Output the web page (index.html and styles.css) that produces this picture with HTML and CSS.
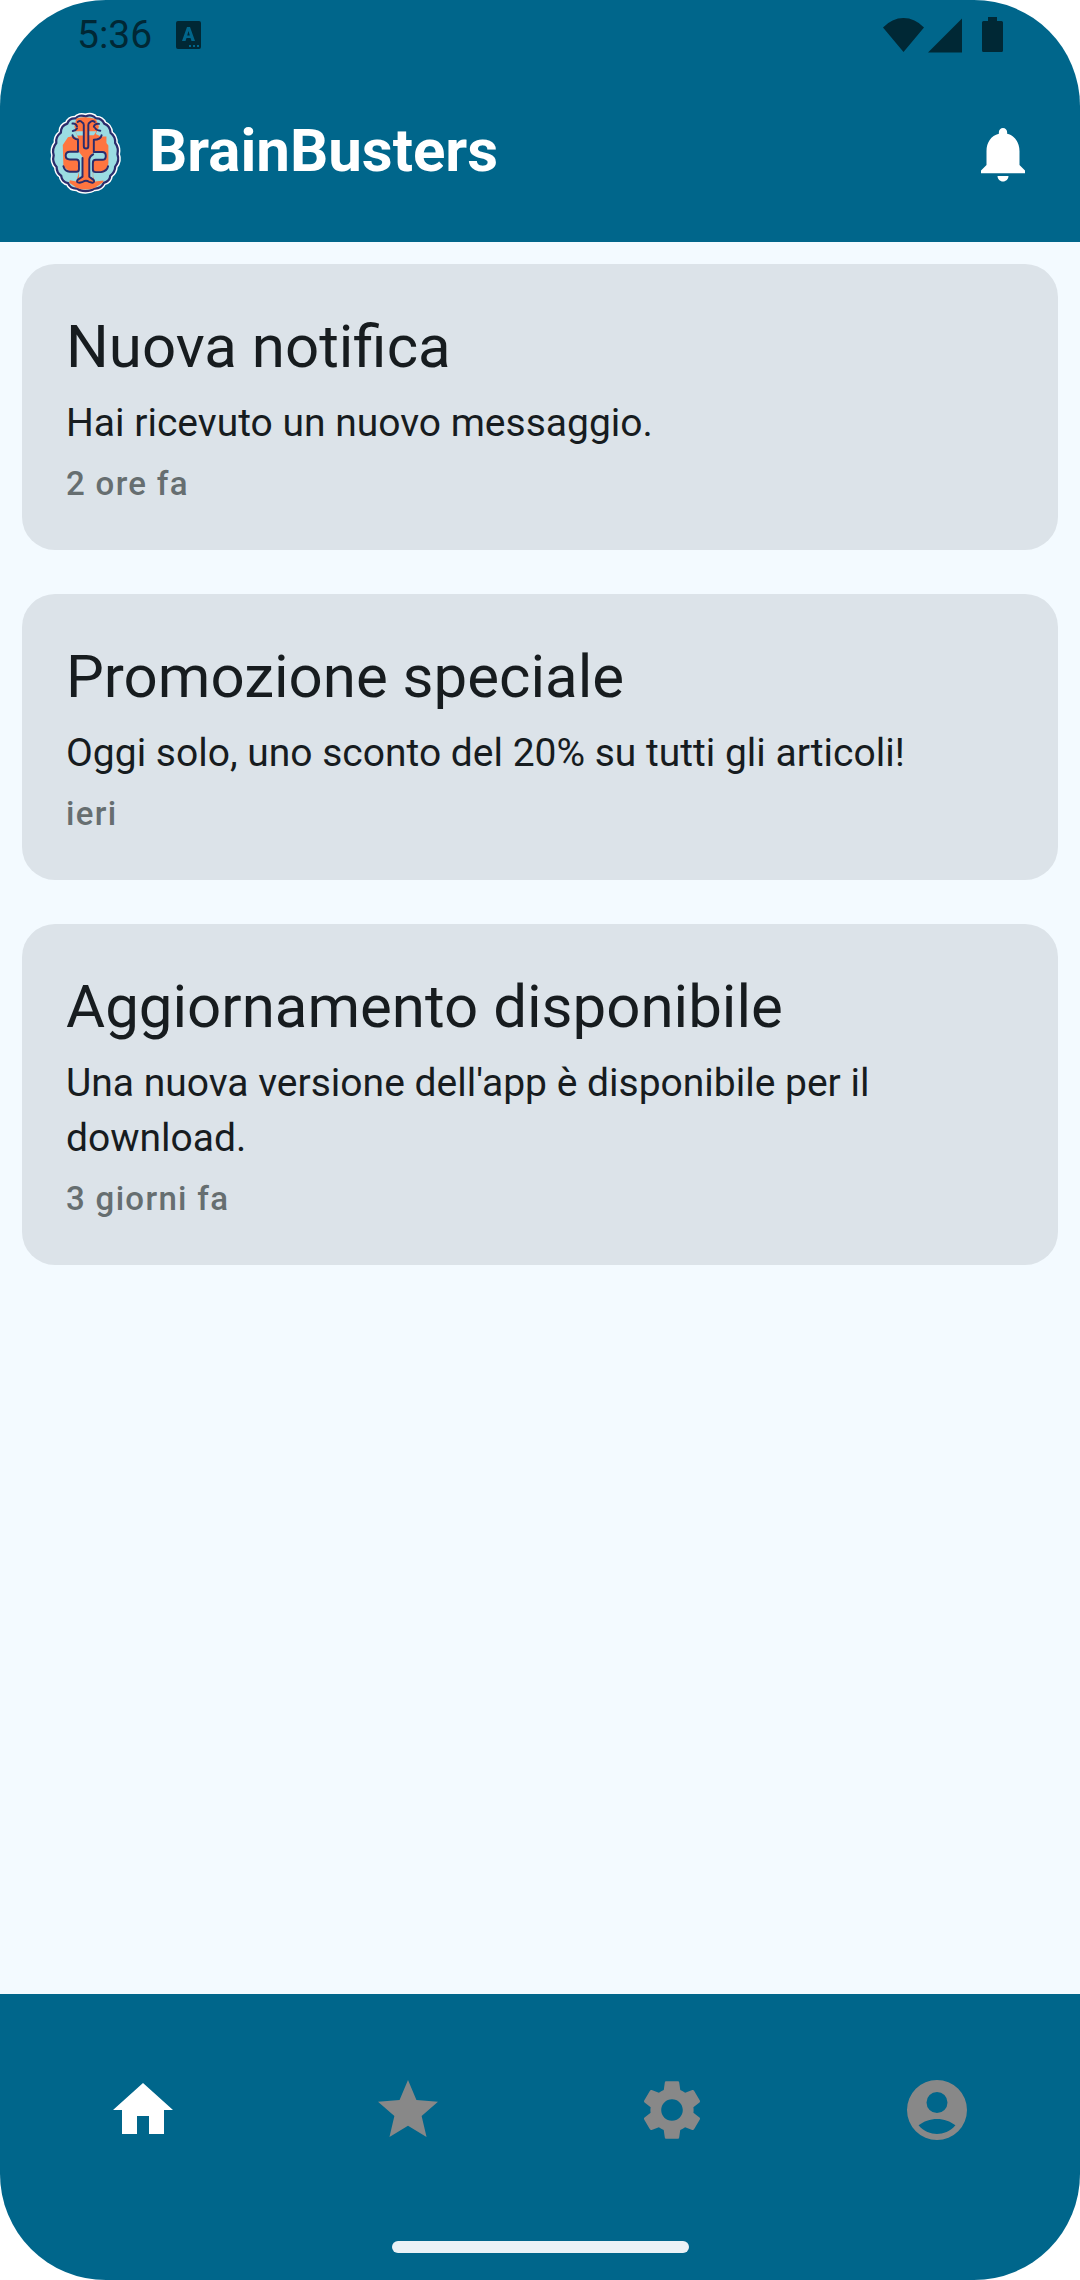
FILE: index.html
```html
<!DOCTYPE html>
<html lang="it">
<head>
<meta charset="utf-8">
<meta name="viewport" content="width=device-width, initial-scale=1">
<title>BrainBusters</title>
<link rel="stylesheet" href="styles.css">
</head>
<body>
<div class="screen">
  <header class="top">
    <div class="status">
      <span class="clock">5:36</span>
      <svg class="status-app" viewBox="0 0 25 28" aria-hidden="true"><path fill-rule="evenodd" d="M2 0h21a2 2 0 0 1 2 2v24a2 2 0 0 1-2 2H2a2 2 0 0 1-2-2V2a2 2 0 0 1 2-2zM11 6 6 20h3.500l1-3h4l1 3H19L14 6zM12.500 10 13.800 14.500h-2.600zM13 24v2h2v-2zM17 24v2h2v-2zM21 24v2h2v-2z"/></svg>
      <svg class="status-signal" viewBox="0 0 121 36" aria-hidden="true"><path d="M0 10.500Q9 1 20.500 1T41 10.500L20.500 35zM45 35.500 79 1.500v34zM105 0h9v4h4.500q1.500 0 1.500 1.500v28q0 1.500-1.500 1.500h-18q-1.500 0-1.500-1.500v-28q0-1.500 1.500-1.500h4.500z"/></svg>
    </div>
    <div class="appbar">
      <svg class="logo" viewBox="8 26 272 272" aria-hidden="true">
        <path class="brain-rim" d="M137 46C124 40 111 44 106 52C93 51 84 57 80 68C67 72 60 83 60 96C50 104 44 116 46 128C37 139 34 154 38 166C34 181 39 194 47 202C47 215 53 224 61 229C62 241 71 250 82 252C87 263 98 270 111 269C121 279 151 279 163 269C177 270 188 262 193 251C205 248 212 240 213 229C223 222 228 212 228 201C237 190 240 176 235 163C238 150 235 137 228 128C229 115 223 104 214 97C213 82 206 72 194 68C189 57 180 51 168 52C162 43 149 40 137 46Z"/>
        <path class="brain-body" d="M137 46C124 40 111 44 106 52C93 51 84 57 80 68C67 72 60 83 60 96C50 104 44 116 46 128C37 139 34 154 38 166C34 181 39 194 47 202C47 215 53 224 61 229C62 241 71 250 82 252C87 263 98 270 111 269C121 279 151 279 163 269C177 270 188 262 193 251C205 248 212 240 213 229C223 222 228 212 228 201C237 190 240 176 235 163C238 150 235 137 228 128C229 115 223 104 214 97C213 82 206 72 194 68C189 57 180 51 168 52C162 43 149 40 137 46Z"/>
        <path class="brain-orange" d="M108 52Q137 44 168 54L178 78 168 100 184 108 201 108V128L207 136V190L204 210 190 219 160 218V232L166 247 192 244 190 250 164 267Q137 277 110 267L86 251 88 243 108 247 116 218 88 218 68 200 66 134 82 110 98 106 114 114 106 94 102 76Z"/>
        <path class="brain-blue" d="M106 92h24v13h-20zM146 92h24l-8 12h-16zM88 154h27l12 16v62l-11 8V188q0-10-10-10H88q-13 0-13-12t13-12zM162 155h26q11 0 11 12t-11 12h-20q-9 0-9 10v50l-11-8V172z"/>
        <path class="brain-line" d="M112 63q8-6 14 1 5 2 5 8v66q0 7 7 7t7-7V72q0-6 5-8 7-7 15-1M97 91q9-2 13-8M96 104q3 12 17 13v38H88q-13 0-13 12t13 12h20q8 0 8 10v20q0 8-8 8H88Q72 216 68 200M110 77q-3-10-14-9M162 78q3-11 16-9M182 90q-12-1-16-8M186 104q-3 14-24 14v38h26q11 0 11 12t-11 12h-20q-9 0-9 10v20q0 8 9 8h16q19-3 22-18M127 174v58l-15 10q-6 9 6 9l10-3q10-7 19 0l11 3q8-2 3-9l-13-10v-54q2-10 12-15"/>
      </svg>
      <h1 class="brand">BrainBusters</h1>
      <button class="bell" type="button" aria-label="Notifiche"><svg class="bell-icon" viewBox="0 0 24 24" aria-hidden="true"><path d="M12 22c1.100 0 2-.9 2-2h-4c0 1.100.89 2 2 2zm6-6v-5c0-3.070-1.640-5.640-4.500-6.320V4c0-.83-.67-1.500-1.500-1.500s-1.500.67-1.500 1.500v.68C7.630 5.360 6 7.920 6 11v5l-2 2v1h16v-1l-2-2z"/></svg></button>
    </div>
  </header>

  <main class="feed">
    <article class="card">
      <h2 class="card-title">Nuova notifica</h2>
      <p class="card-text">Hai ricevuto un nuovo messaggio.</p>
      <p class="card-time">2 ore fa</p>
    </article>
    <article class="card">
      <h2 class="card-title">Promozione speciale</h2>
      <p class="card-text">Oggi solo, uno sconto del 20% su tutti gli articoli!</p>
      <p class="card-time">ieri</p>
    </article>
    <article class="card">
      <h2 class="card-title">Aggiornamento disponibile</h2>
      <p class="card-text">Una nuova versione dell'app è disponibile per il download.</p>
      <p class="card-time">3 giorni fa</p>
    </article>
  </main>

  <footer class="bottom">
    <nav class="tabs">
      <a class="tab tab-active" href="#home" aria-label="Home"><svg class="tab-icon" viewBox="0 0 24 24" aria-hidden="true"><path d="M10 20v-6h4v6h5v-8h3L12 3 2 12h3v8z"/></svg></a>
      <a class="tab" href="#preferiti" aria-label="Preferiti"><svg class="tab-icon" viewBox="0 0 24 24" aria-hidden="true"><path d="M12 17.270 18.180 21l-1.640-7.030L22 9.240l-7.190-.61L12 2 9.190 8.630 2 9.240l5.460 4.730L5.820 21z"/></svg></a>
      <a class="tab" href="#impostazioni" aria-label="Impostazioni"><svg class="tab-icon" viewBox="0 0 24 24" aria-hidden="true"><path d="M19.140 12.940c.04-.3.06-.61.06-.94 0-.32-.02-.64-.07-.94l2.030-1.580c.18-.14.23-.41.12-.61l-1.920-3.320c-.12-.22-.37-.29-.59-.22l-2.390.96c-.5-.38-1.030-.7-1.620-.94l-.36-2.540c-.04-.24-.24-.41-.48-.41h-3.840c-.24 0-.43.17-.47.41l-.36 2.540c-.59.24-1.130.57-1.620.94l-2.390-.96c-.22-.08-.47 0-.59.22L2.740 8.870c-.12.21-.08.47.12.61l2.030 1.580c-.05.3-.09.63-.09.94s.02.64.07.94l-2.030 1.580c-.18.14-.23.41-.12.61l1.920 3.320c.12.22.37.29.59.22l2.390-.96c.5.38 1.030.7 1.620.94l.36 2.540c.05.24.24.41.48.41h3.840c.24 0 .44-.17.47-.41l.36-2.540c.59-.24 1.130-.56 1.620-.94l2.390.96c.22.08.47 0 .59-.22l1.920-3.320c.12-.22.07-.47-.12-.61l-2.010-1.580zM12 15.600c-1.980 0-3.600-1.620-3.600-3.600s1.620-3.600 3.600-3.600 3.600 1.620 3.600 3.600-1.620 3.600-3.600 3.600z"/></svg></a>
      <a class="tab" href="#profilo" aria-label="Profilo"><svg class="tab-icon" viewBox="0 0 24 24" aria-hidden="true"><path fill-rule="evenodd" d="M12 2a10 10 0 1 0 0 20 10 10 0 0 0 0-20zM12 6a3.500 3.500 0 1 1 0 7 3.500 3.500 0 0 1 0-7zM12 20c-2.030 0-4.430-.82-6.140-2.880C7.550 15.800 9.680 15 12 15s4.450.8 6.140 2.120C16.430 19.180 14.030 20 12 20z"/></svg></a>
    </nav>
    <div class="home-bar"></div>
  </footer>
</div>
</body>
</html>
```
FILE: styles.css
```css
* {
  box-sizing: border-box;
}

body {
  margin: 0;
  background: #ffffff;
  color: #171c1f;
  font-family: Roboto, "Noto Sans", sans-serif;
}

h1, h2, p {
  margin: 0;
}

svg {
  display: block;
}

.screen {
  display: flex;
  flex-direction: column;
  min-height: 100vh;
  background: #f3faff;
  border-radius: 106px;
  overflow: hidden;
}

.top,
.bottom {
  background: #00668b;
}

.status {
  display: flex;
  align-items: center;
  height: 66px;
  padding: 4px 76px 0 77px;
  color: #002835;
  fill: #002835;
}

.clock {
  font-size: 39px;
  line-height: 60px;
}

.status-app {
  width: 25px;
  height: 28px;
  margin-left: 24px;
}

.status-signal {
  width: 121px;
  height: 36px;
  margin-left: auto;
}

.appbar {
  display: flex;
  align-items: center;
  height: 176px;
  padding: 0 44px;
}

.logo {
  width: 88px;
  height: 88px;
  margin-right: 17px;
}

.brain-rim {
  fill: #ffffff;
  stroke: #ffffff;
  stroke-width: 16px;
}

.brain-body {
  fill: #9bdce2;
  stroke: #2b2c6c;
  stroke-width: 7px;
}

.brain-orange {
  fill: #ff7540;
}

.brain-blue {
  fill: #9bdce2;
}

.brain-line {
  fill: none;
  stroke: #2b2c6c;
  stroke-width: 6px;
  stroke-linecap: round;
  stroke-linejoin: round;
}

.brand {
  padding-bottom: 8px;
  color: #ffffff;
  font-size: 60px;
  font-weight: 700;
  line-height: 77px;
}

.bell {
  margin-left: auto;
  padding: 0;
  border: 0;
  background: none;
  fill: #ffffff;
}

.bell-icon {
  width: 66px;
  height: 66px;
}

.feed {
  display: flex;
  flex: 1;
  flex-direction: column;
  gap: 44px;
  padding: 22px;
}

.card {
  display: flex;
  flex-direction: column;
  gap: 11px;
  padding: 44px;
  border-radius: 33px;
  background: #dce3e9;
}

.card-title {
  font-size: 60px;
  font-weight: 400;
  line-height: 77px;
}

.card-text {
  font-size: 39px;
  line-height: 55px;
}

.card-time {
  color: #666e70;
  font-size: 33px;
  font-weight: 500;
  line-height: 44px;
  letter-spacing: 0.04em;
}

.bottom {
  display: flex;
  flex-direction: column;
  align-items: center;
  padding-bottom: 27px;
}

.tabs {
  display: grid;
  grid-template-columns: repeat(4, 1fr);
  width: 100%;
  padding: 80px 11px 95px;
}

.tab {
  display: flex;
  justify-content: center;
  fill: #888888;
}

.tab-active {
  fill: #ffffff;
}

.tab-icon {
  width: 72px;
  height: 72px;
}

.home-bar {
  width: 297px;
  height: 12px;
  border-radius: 6px;
  background: #eaf2f6;
}
```
